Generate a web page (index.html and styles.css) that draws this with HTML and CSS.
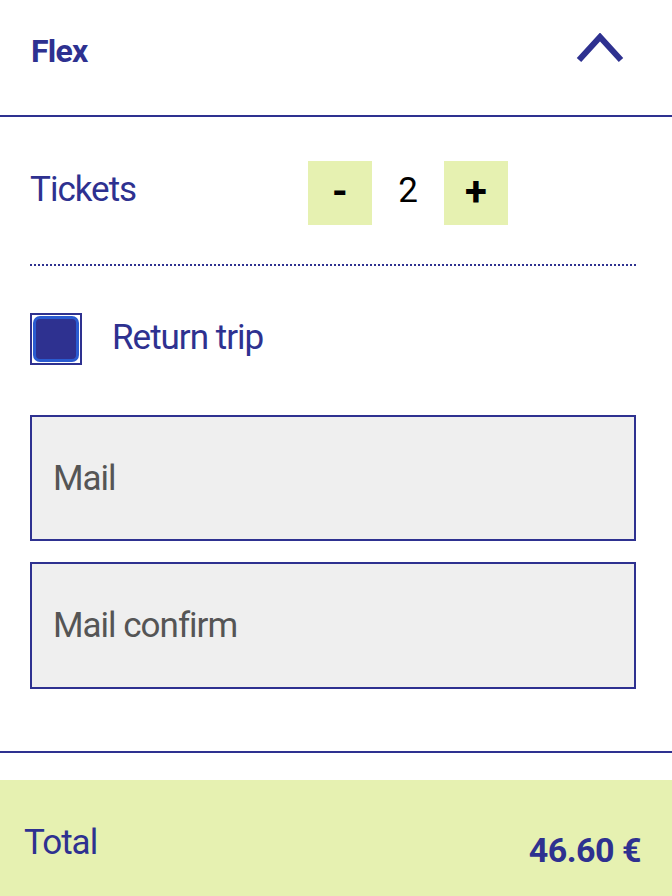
FILE: index.html
```html
<!DOCTYPE html>
<html lang="en">

<head>
    <meta charset="UTF-8">
    <meta name="viewport" content="width=device-width, initial-scale=1.0">
    <title>Flex ticket</title>
    <link rel="stylesheet" href="styles.css">
</head>

<body>
    <div class="header">
        <span class="title">Flex</span>
        <svg class="chevron" width="48" height="30" viewBox="0 0 48 30">
            <polyline points="3,27 24,4 45,27" fill="none" stroke="#2e3190" stroke-width="6" />
        </svg>
    </div>

    <div class="content">
        <div class="tickets-row">
            <span class="label">Tickets</span>
            <button class="step" type="button">-</button>
            <span class="count">2</span>
            <button class="step" type="button">+</button>
        </div>

        <label class="check-row">
            <span class="checkbox"><span class="checkbox-inner"></span></span>
            <span class="check-label">Return trip</span>
        </label>

        <input class="mail first" type="email" placeholder="Mail">
        <input class="mail" type="email" placeholder="Mail confirm">
    </div>

    <div class="divider"></div>

    <div class="total">
        <span class="total-label">Total</span>
        <span class="total-price">46.60 €</span>
    </div>
</body>

</html>
```

FILE: styles.css
```css
body {
    font-family: Roboto, "Liberation Sans", sans-serif;
    background-color: #fff;
    color: #2e3190;
    margin: 0;
    padding: 0;
}

.header {
    display: flex;
    justify-content: space-between;
    align-items: center;
    height: 117px;
    padding: 0 48px 14px 31px;
    box-sizing: border-box;
    border-bottom: 2px solid #2e3190;
}

.title {
    font-size: 32px;
    font-weight: bold;
    line-height: 1;
    letter-spacing: -0.8px;
}

.chevron {
    margin-bottom: 6px;
}

.content {
    margin: 0 36px 0 30px;
}

.tickets-row {
    display: flex;
    align-items: center;
    padding: 44px 0 39px;
    border-bottom: 2px dotted #2e3190;
}

.label {
    width: 278px;
    font-size: 35px;
    line-height: 1;
    letter-spacing: -1px;
    margin-bottom: 8px;
}

.step {
    width: 64px;
    height: 64px;
    border: none;
    padding: 0 0 4px;
    background-color: #e6f1b1;
    font-family: Roboto, sans-serif;
    font-size: 40px;
    font-weight: bold;
    color: #000;
    cursor: pointer;
}

.count {
    width: 72px;
    text-align: center;
    font-size: 35px;
    line-height: 1;
    color: #000;
    margin-bottom: 5px;
}

.check-row {
    display: flex;
    align-items: center;
    margin-top: 47px;
}

.checkbox {
    width: 52px;
    height: 52px;
    box-sizing: border-box;
    border: 2px solid #2e3190;
    padding: 1px;
}

.checkbox-inner {
    display: block;
    width: 100%;
    height: 100%;
    box-sizing: border-box;
    border: 3px solid #2a5bd0;
    border-radius: 7px;
    background-color: #2e3190;
}

.check-label {
    margin-left: 30px;
    font-size: 35px;
    line-height: 1;
    letter-spacing: -1px;
    margin-bottom: 3px;
}

.mail {
    display: block;
    width: 100%;
    height: 127px;
    box-sizing: border-box;
    margin-top: 21px;
    padding: 0 21px;
    border: 2px solid #2e3190;
    border-radius: 0;
    background-color: #efefef;
    font-family: Roboto, sans-serif;
    font-size: 35px;
    letter-spacing: -1px;
    color: #555;
    outline: none;
}

.mail.first {
    margin-top: 50px;
    height: 126px;
}

.mail::placeholder {
    color: #555;
}

.divider {
    margin-top: 62px;
    border-top: 2px solid #2e3190;
}

.total {
    display: flex;
    justify-content: space-between;
    align-items: center;
    height: 116px;
    margin-top: 27px;
    padding: 0 31px 0 24px;
    background-color: #e6f1b1;
}

.total-label {
    font-size: 35px;
    line-height: 1;
    letter-spacing: -1px;
    margin-top: 9px;
}

.total-price {
    font-size: 34px;
    font-weight: bold;
    line-height: 1;
    letter-spacing: -0.5px;
    margin-top: 23px;
}
```
